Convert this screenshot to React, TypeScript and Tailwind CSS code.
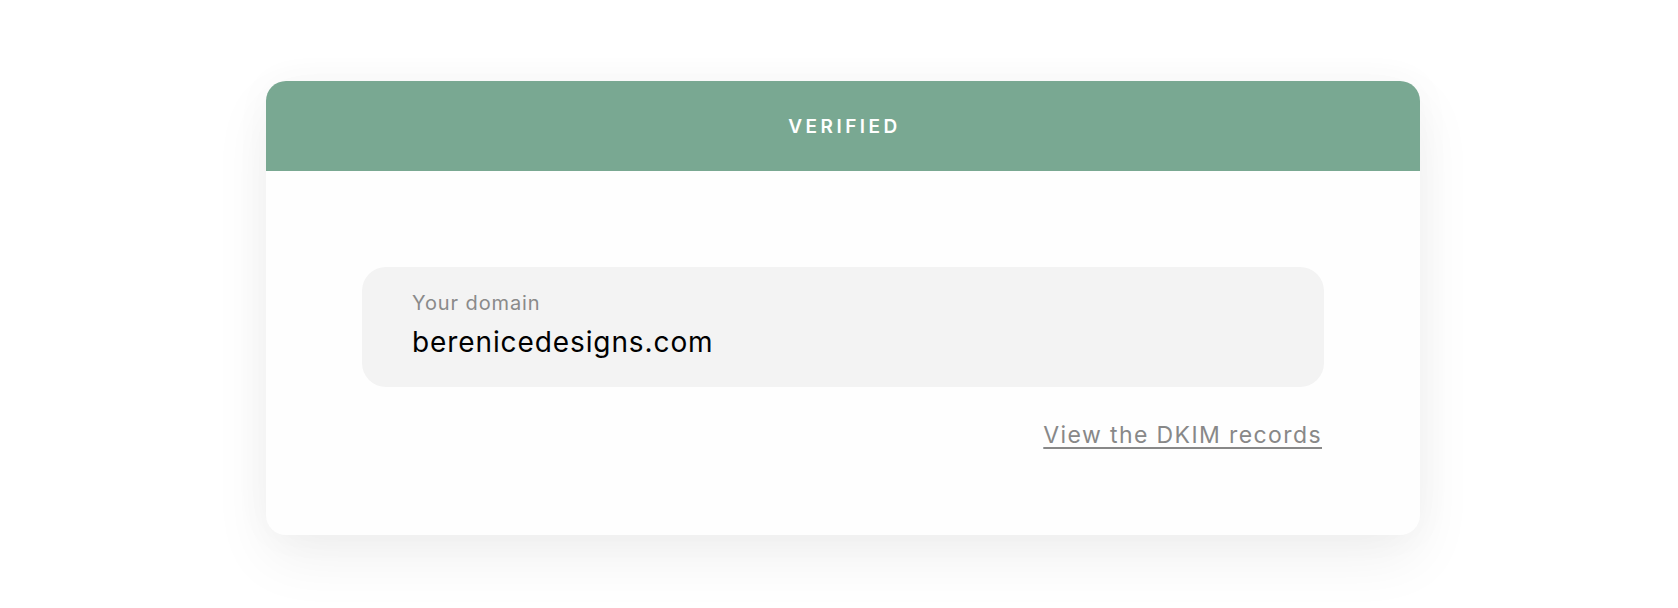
export default function App() {
  return (
    <div
      className="min-h-[608px] w-full bg-white pt-[81px] pl-[8px] flex justify-center"
      style={{ fontFamily: 'Inter, "Liberation Sans", Arial, sans-serif' }}
    >
      <div className="w-[1154px] h-[454px] rounded-[20px] overflow-hidden bg-[#fefefe] shadow-[0_24px_60px_rgba(0,0,0,0.06),0_0_40px_rgba(0,0,0,0.03)] flex flex-col">
        <div className="h-[90px] bg-[#79a892] flex items-center justify-center">
          <span className="text-white text-[19px] font-semibold tracking-[3.5px] leading-none pl-[3px]">VERIFIED</span>
        </div>
        <div className="px-[96px] pt-[96px] flex flex-col">
          <div className="h-[120px] rounded-[24px] bg-[#f3f3f3] pl-[50px] pt-[24px] flex flex-col">
            <span className="text-[20px] leading-[24px] tracking-[0.9px] text-[#8a8a8a]">Your domain</span>
            <span className="mt-[10px] text-[28px] leading-[34px] tracking-[0.9px] text-black">berenicedesigns.com</span>
          </div>
          <div className="mt-[34px] flex justify-end pr-[2px]">
            <a href="#" className="text-[23px] leading-[28px] tracking-[1.4px] text-[#888888] underline underline-offset-[4px] decoration-[2px]">
              View the DKIM records
            </a>
          </div>
        </div>
      </div>
    </div>
  );
}
